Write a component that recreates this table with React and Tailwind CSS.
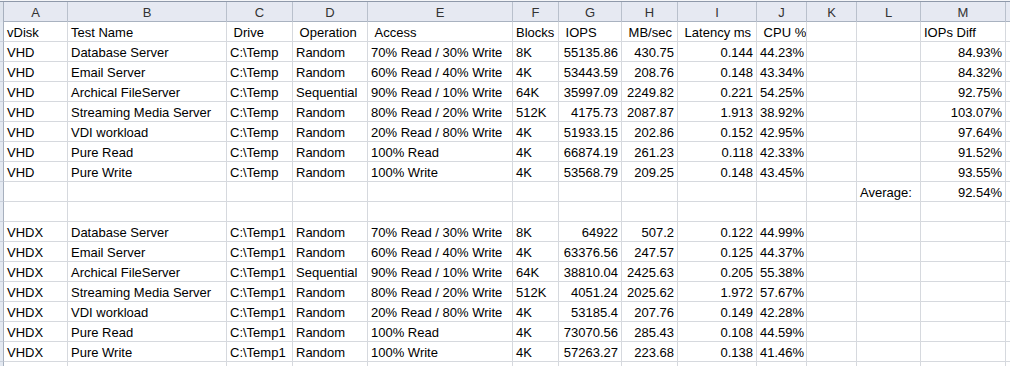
import React from 'react';

const cols = ['A', 'B', 'C', 'D', 'E', 'F', 'G', 'H', 'I', 'J', 'K', 'L', 'M'];

// right aligned columns (numbers)
const right = [false, false, false, false, false, false, true, true, true, true, false, false, true];

const gridCols = 'grid grid-cols-[4px_64px_159px_66px_75px_145px_46px_63px_56px_79px_50px_50px_64px_85px_1fr]';

const rows = [
  ['vDisk', 'Test Name', '\u00a0Drive', '\u00a0Operation', '\u00a0Access', 'Blocks', '\u00a0IOPS', '\u00a0MB/sec', '\u00a0Latency ms', '\u00a0CPU %', '', '', 'IOPs Diff', 'header'],
  ['VHD', 'Database Server', 'C:\\Temp', 'Random', '70% Read / 30% Write', '8K', '55135.86', '430.75', '0.144', '44.23%', '', '', '84.93%'],
  ['VHD', 'Email Server', 'C:\\Temp', 'Random', '60% Read / 40% Write', '4K', '53443.59', '208.76', '0.148', '43.34%', '', '', '84.32%'],
  ['VHD', 'Archical FileServer', 'C:\\Temp', 'Sequential', '90% Read / 10% Write', '64K', '35997.09', '2249.82', '0.221', '54.25%', '', '', '92.75%'],
  ['VHD', 'Streaming Media Server', 'C:\\Temp', 'Random', '80% Read / 20% Write', '512K', '4175.73', '2087.87', '1.913', '38.92%', '', '', '103.07%'],
  ['VHD', 'VDI workload', 'C:\\Temp', 'Random', '20% Read / 80% Write', '4K', '51933.15', '202.86', '0.152', '42.95%', '', '', '97.64%'],
  ['VHD', 'Pure Read', 'C:\\Temp', 'Random', '100% Read', '4K', '66874.19', '261.23', '0.118', '42.33%', '', '', '91.52%'],
  ['VHD', 'Pure Write', 'C:\\Temp', 'Random', '100% Write', '4K', '53568.79', '209.25', '0.148', '43.45%', '', '', '93.55%'],
  ['', '', '', '', '', '', '', '', '', '', '', 'Average:', '92.54%'],
  ['', '', '', '', '', '', '', '', '', '', '', '', ''],
  ['VHDX', 'Database Server', 'C:\\Temp1', 'Random', '70% Read / 30% Write', '8K', '64922', '507.2', '0.122', '44.99%', '', '', ''],
  ['VHDX', 'Email Server', 'C:\\Temp1', 'Random', '60% Read / 40% Write', '4K', '63376.56', '247.57', '0.125', '44.37%', '', '', ''],
  ['VHDX', 'Archical FileServer', 'C:\\Temp1', 'Sequential', '90% Read / 10% Write', '64K', '38810.04', '2425.63', '0.205', '55.38%', '', '', ''],
  ['VHDX', 'Streaming Media Server', 'C:\\Temp1', 'Random', '80% Read / 20% Write', '512K', '4051.24', '2025.62', '1.972', '57.67%', '', '', ''],
  ['VHDX', 'VDI workload', 'C:\\Temp1', 'Random', '20% Read / 80% Write', '4K', '53185.4', '207.76', '0.149', '42.28%', '', '', ''],
  ['VHDX', 'Pure Read', 'C:\\Temp1', 'Random', '100% Read', '4K', '73070.56', '285.43', '0.108', '44.59%', '', '', ''],
  ['VHDX', 'Pure Write', 'C:\\Temp1', 'Random', '100% Write', '4K', '57263.27', '223.68', '0.138', '41.46%', '', '', ''],
  ['', '', '', '', '', '', '', '', '', '', '', '', ''],
];

const Row = ({ cells }) => {
  const isHeader = cells[13] === 'header';
  return (
    <div className={`${gridCols} h-5`}>
      <div className="bg-[#e4e9f1] border-r border-[#a7b0be] border-b border-b-[#c9d0db]" />
      {cells.slice(0, 13).map((c, i) => (
        <div
          key={i}
          className={`border-r border-b border-[#d6d9de] px-[3px] leading-[22px] whitespace-nowrap overflow-hidden ${
            right[i] && !isHeader ? 'text-right' : 'text-left'
          }`}
        >
          {c}
        </div>
      ))}
      <div className="border-b border-[#d6d9de]" />
    </div>
  );
};

const App = () => {
  return (
    <div className="w-[1010px] h-[366px] overflow-hidden bg-white text-[13px] text-black font-['Liberation_Sans',Arial,sans-serif]">
      <div className="h-[2px] bg-[#f4f5f8] border-b border-[#8f99aa]" />
      <div className={`${gridCols} h-[20px] bg-[#e6e9f2] border-b border-[#a9b2c0] text-[#333]`}>
        <div className="border-r border-[#a7b0be] bg-[#dfe4ed]" />
        {cols.map((c) => (
          <div key={c} className="border-r border-[#b9c0cc] text-center leading-[21px]">
            {c}
          </div>
        ))}
        <div />
      </div>
      {rows.map((r, i) => (
        <Row key={i} cells={r} />
      ))}
    </div>
  );
};

export default App;
